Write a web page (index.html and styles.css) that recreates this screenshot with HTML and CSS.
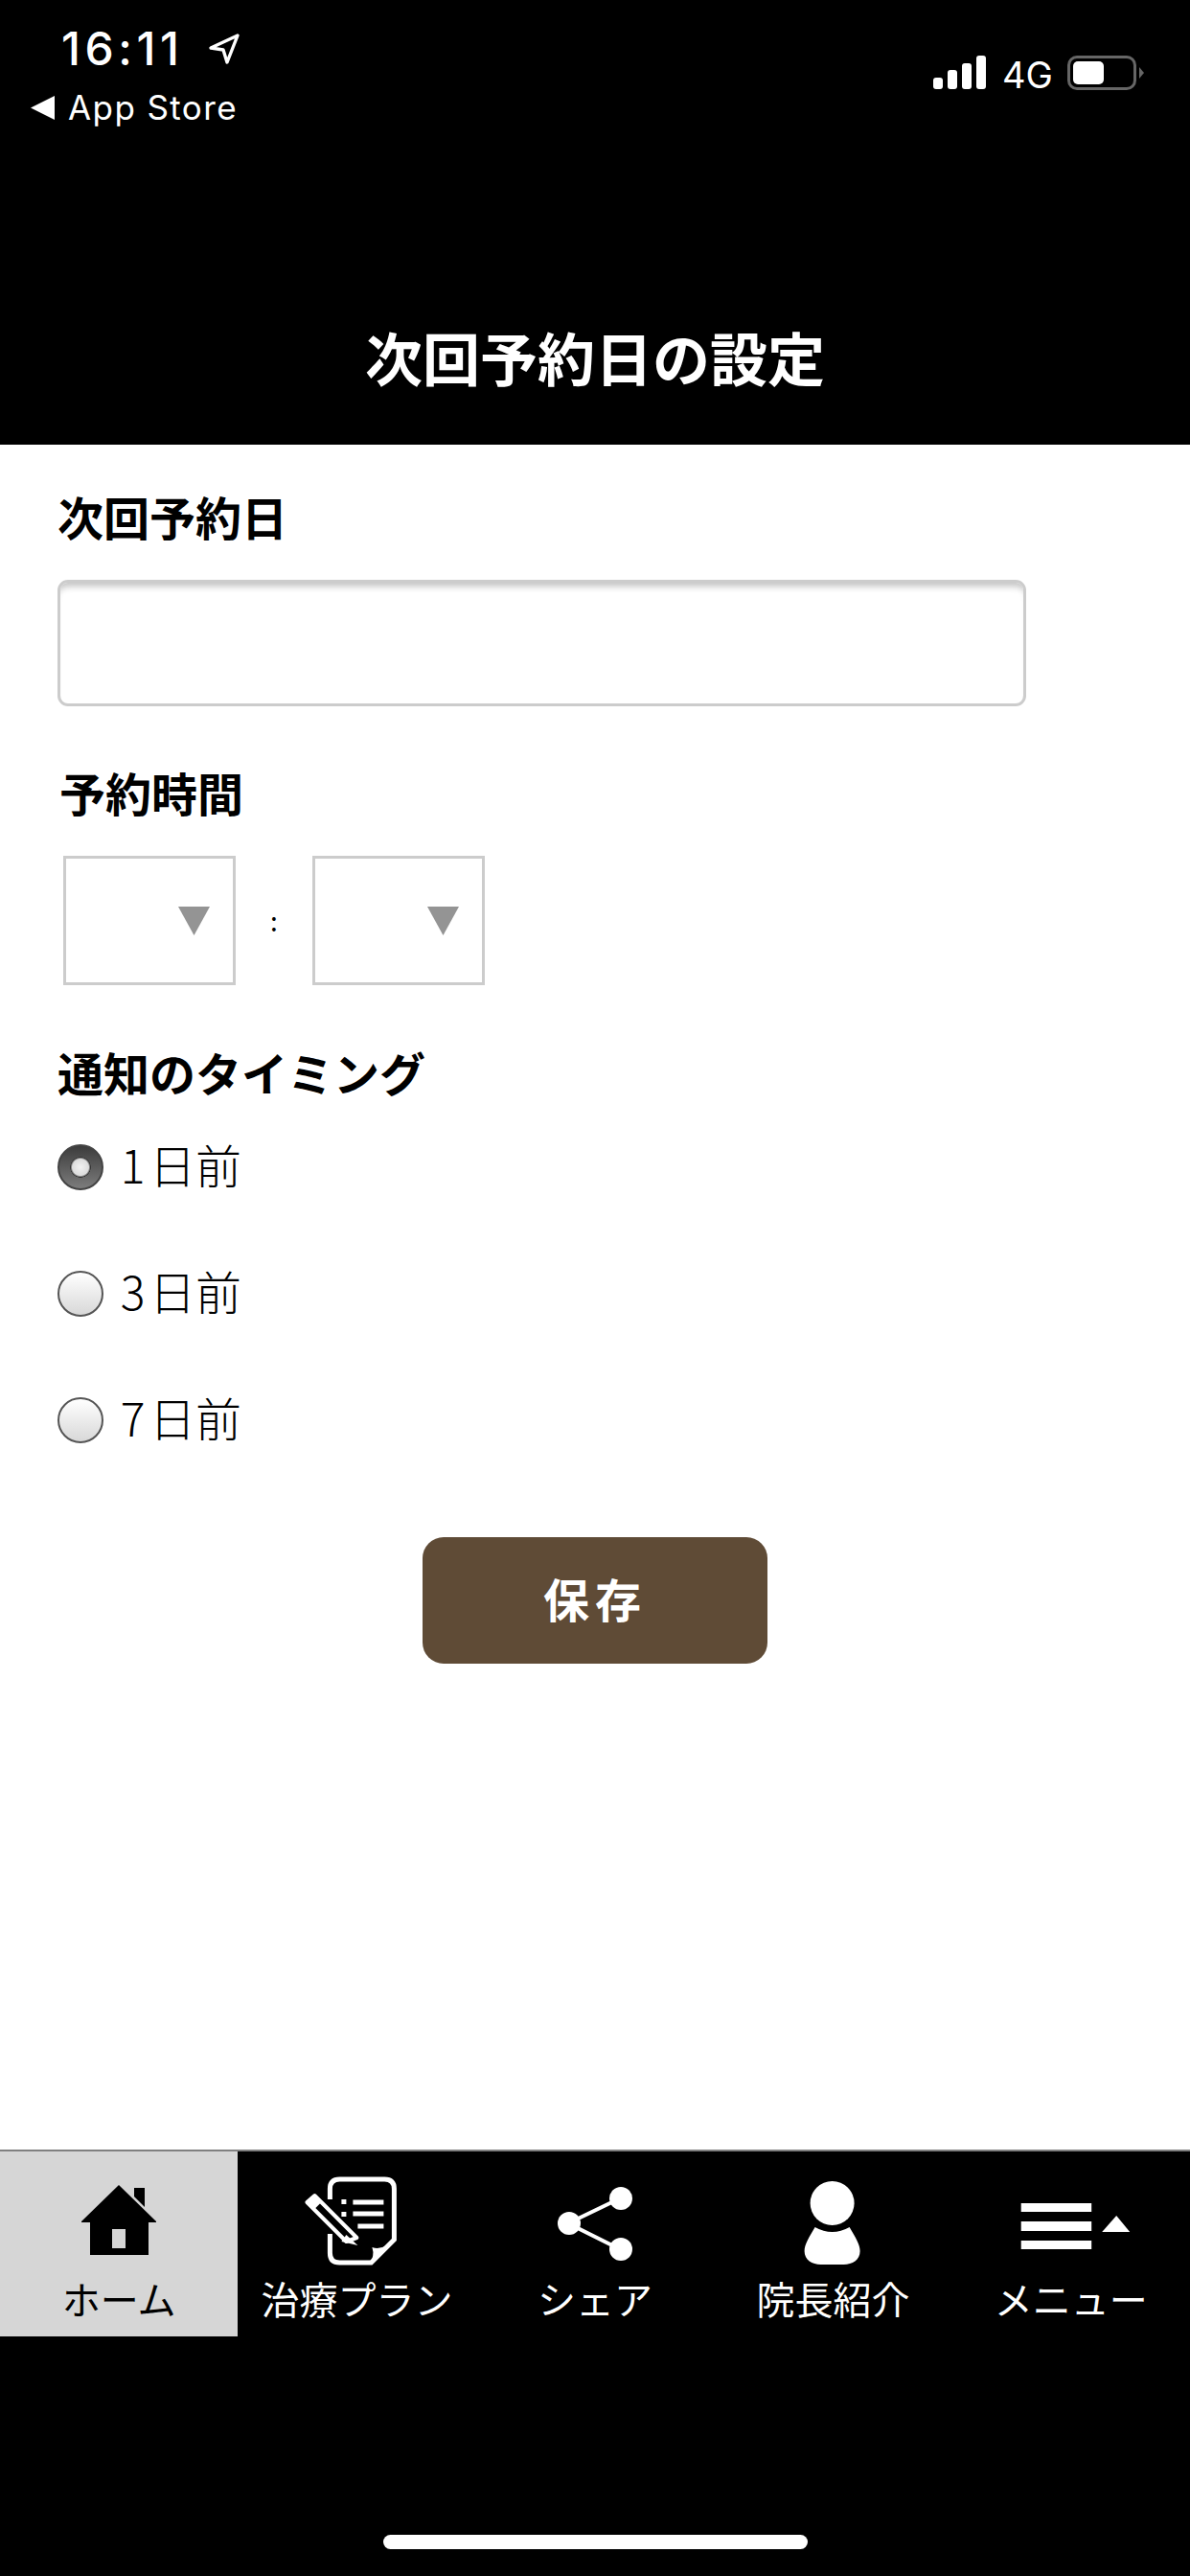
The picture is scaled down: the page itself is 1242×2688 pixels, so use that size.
FILE: index.html
```html
<!DOCTYPE html>
<html lang="ja">
<head>
<meta charset="utf-8">
<title>次回予約日の設定</title>
<link rel="stylesheet" href="styles.css">
</head>
<body>
<div class="phone">
  <header class="top">
    <div class="status">
      <div class="status-left">
        <div class="time-row">
          <span class="time">16:11</span>
          <svg class="loc" viewBox="0 0 34 34"><path d="M31 3 L3 16 L16 18 L20 31 Z" fill="none" stroke="#fff" stroke-width="3.4" stroke-linejoin="round"/></svg>
        </div>
        <div class="back-row">
          <svg class="back" viewBox="0 0 25 25"><path d="M0 12.5 L25 0 L25 25 Z" fill="#fff"/></svg>
          <span class="back-text">App Store</span>
        </div>
      </div>
      <div class="status-right">
        <div class="signal"><i class="b1"></i><i class="b2"></i><i class="b3"></i><i class="b4"></i></div>
        <span class="net">4G</span>
        <div class="battery"><div class="level"></div></div>
        <div class="nub"></div>
      </div>
    </div>
    <h1 class="title">次回予約日の設定</h1>
  </header>

  <main class="form">
    <h2 class="label">次回予約日</h2>
    <input class="date" type="text">

    <h2 class="label label-time">予約時間</h2>
    <div class="time-select">
      <div class="sel"><svg class="caret" viewBox="0 0 33 30"><path d="M0 0 H33 L16.5 30 Z" fill="#949494"/></svg></div>
      <span class="colon">:</span>
      <div class="sel"><svg class="caret" viewBox="0 0 33 30"><path d="M0 0 H33 L16.5 30 Z" fill="#949494"/></svg></div>
    </div>

    <h2 class="label">通知のタイミング</h2>
    <label class="radio-row"><input class="radio" type="radio" name="t" checked><span class="radio-text"><b>1</b>日前</span></label>
    <label class="radio-row"><input class="radio" type="radio" name="t"><span class="radio-text"><b>3</b>日前</span></label>
    <label class="radio-row"><input class="radio" type="radio" name="t"><span class="radio-text"><b>7</b>日前</span></label>

    <button class="save" type="button">保存</button>
  </main>

  <nav class="tabs">
    <a class="tab active">
      <svg class="ico" viewBox="62 2270 124 100">
        <path fill-rule="evenodd" d="M124 2280 L163 2318 V2319 H155 V2353 H94 V2319 H85 V2318 Z M117 2326 V2346 H131 V2326 Z" fill="#000"/>
        <path d="M140 2283 H151 V2303 L140 2292 Z" fill="#000"/>
      </svg>
      <span>ホーム</span>
    </a>
    <a class="tab">
      <svg class="ico" viewBox="310.6 2270 124 100">
        <path d="M344 2295 V2284 Q344 2274 354 2274 H401 Q411 2274 411 2284 V2337 L387 2361 H354 Q344 2361 344 2351 V2331" fill="none" stroke="#fff" stroke-width="5"/>
        <path d="M413 2335 L385 2363 Q391 2354 388 2345 Q400 2349 413 2335 Z" fill="#fff"/>
        <path d="M356 2295 h5 v5 h-5 Z M356 2308 h5 v5 h-5 Z" fill="#fff"/>
        <path d="M368 2298 H400 M368 2310 H400 M373 2323 H400" stroke="#fff" stroke-width="5" fill="none"/>
        <path d="M320 2298 L328 2291 L372 2335 L361 2339 Z" fill="none" stroke="#fff" stroke-width="4" stroke-linejoin="round"/>
        <path d="M320 2298 L328 2291 L335 2298 L327 2306 Z" fill="#fff"/>
        <path d="M361 2332 L373 2343 L356 2339 Z" fill="#fff"/>
      </svg>
      <span>治療プラン</span>
    </a>
    <a class="tab">
      <svg class="ico" viewBox="559 2270 124 100">
        <path d="M647 2294 L593 2320 L647 2347" fill="none" stroke="#fff" stroke-width="4"/>
        <circle cx="648" cy="2294" r="12" fill="#fff"/>
        <circle cx="594" cy="2320" r="12" fill="#fff"/>
        <circle cx="648" cy="2347" r="12" fill="#fff"/>
      </svg>
      <span>シェア</span>
    </a>
    <a class="tab">
      <svg class="ico" viewBox="807.4 2270 124 100">
        <ellipse cx="869" cy="2299" rx="23" ry="23" fill="#fff"/>
        <path d="M851 2324 Q869 2334 887 2324 C893 2334 898 2342 898 2349 C898 2358 890 2363 881 2363 H857 C848 2363 840 2358 840 2349 C840 2342 845 2334 851 2324 Z" fill="#fff"/>
      </svg>
      <span>院長紹介</span>
    </a>
    <a class="tab">
      <svg class="ico" viewBox="1055.8 2270 124 100">
        <path d="M1065.5 2299 H1139 V2308 H1065.5 Z M1065.5 2318 H1139 V2328 H1065.5 Z M1065.5 2338 H1139 V2347 H1065.5 Z" fill="#fff"/>
        <path d="M1165 2312 L1179 2329 H1150 Z" fill="#fff"/>
      </svg>
      <span>メニュー</span>
    </a>
  </nav>

  <footer class="bottom"><div class="home-bar"></div></footer>
</div>
</body>
</html>
```

FILE: styles.css
```css
* { box-sizing: border-box; }
html, body { margin: 0; padding: 0; background: #fff; }
body { font-family: "Noto Sans CJK JP", "Noto Sans", sans-serif; color: #000; }
.phone { width: 1242px; height: 2688px; display: flex; flex-direction: column; overflow: hidden; }

/* header */
.top { height: 464px; background: #000; color: #fff; flex: none; display: flex; flex-direction: column; }
.status { display: flex; justify-content: space-between; height: 330px; padding-top: 25px; }
.status-left { padding-left: 32px; }
.time-row { display: flex; align-items: center; height: 52px; padding-left: 32px; }
.time { font-family: Inter, sans-serif; font-weight: 500; font-size: 48px; letter-spacing: 4.6px; line-height: 52px; }
.loc { width: 34px; height: 34px; margin-left: 25px; }
.back-row { display: flex; align-items: center; height: 50px; margin-top: 10px; }
.back { width: 25px; height: 25px; }
.back-text { font-family: Inter, sans-serif; font-size: 35px; letter-spacing: 1.4px; line-height: 50px; margin-left: 14px; }
.status-right { display: flex; align-items: flex-start; padding-top: 33px; padding-right: 48px; }
.signal { display: flex; align-items: flex-end; gap: 5px; height: 35px; width: 56px; }
.signal i { display: block; width: 10px; background: #fff; border-radius: 3px; }
.b1 { height: 12px; } .b2 { height: 20px; } .b3 { height: 27px; } .b4 { height: 35px; }
.net { font-family: Inter, sans-serif; font-size: 38px; line-height: 40px; margin-left: 16px; width: 68px; }
.battery { width: 72px; height: 36px; border: 3px solid #666; border-radius: 10px; padding: 3px; }
.level { width: 32px; height: 24px; background: #fff; border-radius: 5px; }
.nub { width: 5px; height: 12px; background: #666; margin: 12px 0 0 3px; clip-path: polygon(0 0, 100% 50%, 0 100%); }
.title { margin: 7px 0 0; font-size: 60px; line-height: 70px; font-weight: 700; text-align: center; }

/* form */
.form { flex: 1; background: #fff; padding: 44px 60px 0; display: flex; flex-direction: column; align-items: flex-start; }
.label { margin: 0; font-size: 48px; line-height: 60px; font-weight: 700; }
.label-time { margin-left: 2px; }
.date { display: block; width: 1011px; height: 132px; margin: 37px 0 59px; border: 3px solid #ccc; border-radius: 11px; background: #fff; box-shadow: inset 0 9px 7px -5px #c4c4c4; appearance: none; outline: none; }
.time-select { display: flex; align-items: center; margin: 37px 0 60px 6px; }
.sel { position: relative; width: 180px; height: 135px; border: 3px solid #ccc; background: #fff; }
.caret { position: absolute; left: 117px; top: 50px; width: 33px; height: 30px; }
.colon { width: 80px; text-align: center; font-size: 28px; line-height: 135px; }
.radio-row { display: flex; align-items: center; height: 132px; width: 100%; margin: 0; }
.radio-row:first-of-type { margin-top: 4px; }
.radio { appearance: none; margin: 0; width: 48px; height: 48px; border-radius: 50%; border: 2.5px solid #555; background: linear-gradient(#fff, #d8d8d8); flex: none; }
.radio:checked { border: 2px solid #444; background: radial-gradient(circle at 50% 50%, #f2f2f2 0, #dcdcdc 8.5px, #333 10.5px, transparent 11px), linear-gradient(#3c3c3c, #7c7c7c); }
.radio-text { font-size: 48px; font-weight: 300; line-height: 60px; margin-left: 13px; padding-bottom: 8px; }
.radio-text b { font-weight: 300; display: inline-block; width: 35px; text-align: center; }
.save { display: block; align-self: center; width: 360px; height: 132px; margin-top: 56px; background: #5f4b36; color: #fff; border: 0; border-radius: 22px; font-family: inherit; font-size: 48px; font-weight: 700; letter-spacing: 6px; padding: 0 0 6px; }

/* tabs */
.tabs { flex: none; height: 195px; background: #000; border-top: 2px solid #808080; display: grid; grid-template-columns: repeat(5, 1fr); }
.tab { display: flex; flex-direction: column; align-items: center; padding-top: 25px; color: #fff; font-size: 40px; line-height: 50px; white-space: nowrap; }
.tab.active { background: #d6d6d6; color: #000; }
.ico { width: 124px; height: 100px; display: block; }
.tab span { display: block; margin-top: 3px; }

/* bottom */
.bottom { flex: none; height: 250px; background: #000; padding-top: 207px; }
.home-bar { width: 443px; height: 15px; margin: 0 auto; border-radius: 8px; background: #fff; }
```
